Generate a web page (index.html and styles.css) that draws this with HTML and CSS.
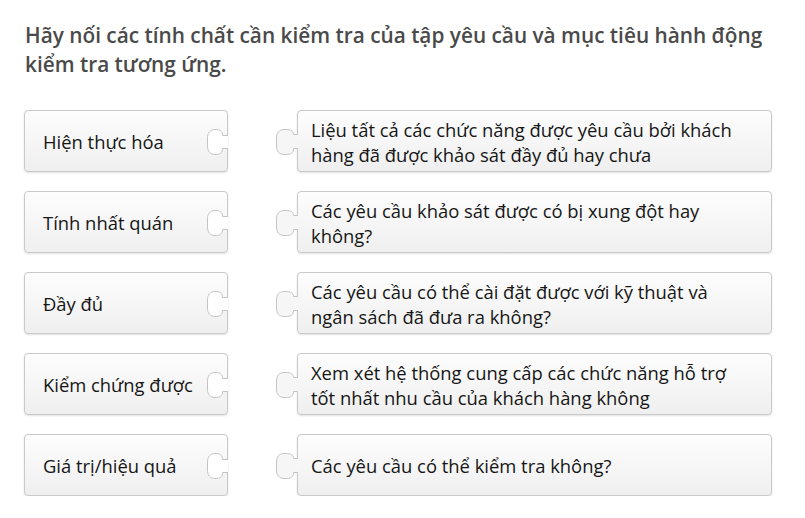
FILE: index.html
```html
<!DOCTYPE html>
<html lang="vi">
<head>
<meta charset="utf-8">
<title>Nối</title>
<link rel="stylesheet" href="styles.css">
</head>
<body>
<h2 class="title">Hãy nối các tính chất cần kiểm tra của tập yêu cầu và mục tiêu hành động kiểm tra tương ứng.</h2>
<div class="rows">
  <div class="row">
    <div class="piece left"><span class="txt">Hiện thực hóa</span><svg class="notch" width="23" height="28" viewBox="0 0 23 28"><path class="nf" d="M23.5 7.5H17.5C17.5 3 15 1.5 10 1.5C5 1.5 2.5 5 2.5 10V18C2.5 23 5 26.5 10 26.5C15 26.5 17.5 25 17.5 20.5H23.5"/></svg></div>
    <div class="piece right"><svg class="tab" width="23" height="28" viewBox="0 0 23 28"><path class="tf" d="M23.5 6.5H18.5C18.5 3 16 1.5 11 1.5H9C4 1.5 1.5 5 1.5 10V18C1.5 23 4 26.5 9 26.5H11C16 26.5 18.5 25 18.5 21V20.5H23.5"/></svg><span class="txt">Liệu tất cả các chức năng được yêu cầu bởi khách hàng đã được khảo sát đầy đủ hay chưa</span></div>
  </div>
  <div class="row">
    <div class="piece left"><span class="txt">Tính nhất quán</span><svg class="notch" width="23" height="28" viewBox="0 0 23 28"><path class="nf" d="M23.5 7.5H17.5C17.5 3 15 1.5 10 1.5C5 1.5 2.5 5 2.5 10V18C2.5 23 5 26.5 10 26.5C15 26.5 17.5 25 17.5 20.5H23.5"/></svg></div>
    <div class="piece right"><svg class="tab" width="23" height="28" viewBox="0 0 23 28"><path class="tf" d="M23.5 6.5H18.5C18.5 3 16 1.5 11 1.5H9C4 1.5 1.5 5 1.5 10V18C1.5 23 4 26.5 9 26.5H11C16 26.5 18.5 25 18.5 21V20.5H23.5"/></svg><span class="txt">Các yêu cầu khảo sát được có bị xung đột hay không?</span></div>
  </div>
  <div class="row">
    <div class="piece left"><span class="txt">Đầy đủ</span><svg class="notch" width="23" height="28" viewBox="0 0 23 28"><path class="nf" d="M23.5 7.5H17.5C17.5 3 15 1.5 10 1.5C5 1.5 2.5 5 2.5 10V18C2.5 23 5 26.5 10 26.5C15 26.5 17.5 25 17.5 20.5H23.5"/></svg></div>
    <div class="piece right"><svg class="tab" width="23" height="28" viewBox="0 0 23 28"><path class="tf" d="M23.5 6.5H18.5C18.5 3 16 1.5 11 1.5H9C4 1.5 1.5 5 1.5 10V18C1.5 23 4 26.5 9 26.5H11C16 26.5 18.5 25 18.5 21V20.5H23.5"/></svg><span class="txt">Các yêu cầu có thể cài đặt được với kỹ thuật và ngân sách đã đưa ra không?</span></div>
  </div>
  <div class="row">
    <div class="piece left"><span class="txt">Kiểm chứng được</span><svg class="notch" width="23" height="28" viewBox="0 0 23 28"><path class="nf" d="M23.5 7.5H17.5C17.5 3 15 1.5 10 1.5C5 1.5 2.5 5 2.5 10V18C2.5 23 5 26.5 10 26.5C15 26.5 17.5 25 17.5 20.5H23.5"/></svg></div>
    <div class="piece right"><svg class="tab" width="23" height="28" viewBox="0 0 23 28"><path class="tf" d="M23.5 6.5H18.5C18.5 3 16 1.5 11 1.5H9C4 1.5 1.5 5 1.5 10V18C1.5 23 4 26.5 9 26.5H11C16 26.5 18.5 25 18.5 21V20.5H23.5"/></svg><span class="txt">Xem xét hệ thống cung cấp các chức năng hỗ trợ tốt nhất nhu cầu của khách hàng không</span></div>
  </div>
  <div class="row">
    <div class="piece left"><span class="txt">Giá trị/hiệu quả</span><svg class="notch" width="23" height="28" viewBox="0 0 23 28"><path class="nf" d="M23.5 7.5H17.5C17.5 3 15 1.5 10 1.5C5 1.5 2.5 5 2.5 10V18C2.5 23 5 26.5 10 26.5C15 26.5 17.5 25 17.5 20.5H23.5"/></svg></div>
    <div class="piece right"><svg class="tab" width="23" height="28" viewBox="0 0 23 28"><path class="tf" d="M23.5 6.5H18.5C18.5 3 16 1.5 11 1.5H9C4 1.5 1.5 5 1.5 10V18C1.5 23 4 26.5 9 26.5H11C16 26.5 18.5 25 18.5 21V20.5H23.5"/></svg><span class="txt">Các yêu cầu có thể kiểm tra không?</span></div>
  </div>
</div>
</body>
</html>
```

FILE: styles.css
```css
html, body {
  margin: 0;
  padding: 0;
  background: #ffffff;
}
body {
  font-family: "Open Sans", "Noto Sans", sans-serif;
  padding: 21px 24px 0 24px;
}
.title {
  margin: 0 0 31px 0;
  font-size: 20.8px;
  line-height: 29px;
  font-weight: 600;
  color: #4a4a4a;
  padding-left: 1px;
}
.rows {
  display: flex;
  flex-direction: column;
  gap: 19px;
}
.row {
  display: flex;
  gap: 69px;
}
.piece {
  position: relative;
  box-sizing: border-box;
  height: 62px;
  border: 1px solid #c9c9c9;
  border-radius: 4px;
  background: linear-gradient(#fdfdfd, #efefef);
  box-shadow: 0 1px 2px rgba(0, 0, 0, 0.12);
  display: flex;
  align-items: center;
  color: #161616;
  font-size: 18.4px;
  line-height: 25px;
}
.piece.left {
  width: 204px;
  padding-left: 18px;
}
.piece.right {
  width: 475px;
  padding: 1px 30px 0 13px;
}
.notch {
  position: absolute;
  right: -1px;
  top: 17px;
  display: block;
}
.tab {
  position: absolute;
  left: -23px;
  top: 17px;
  display: block;
}
.nf {
  fill: #ffffff;
  stroke: #c4c4c4;
  stroke-width: 1;
}
.tf {
  fill: #f6f6f6;
  stroke: #c4c4c4;
  stroke-width: 1;
}
```
